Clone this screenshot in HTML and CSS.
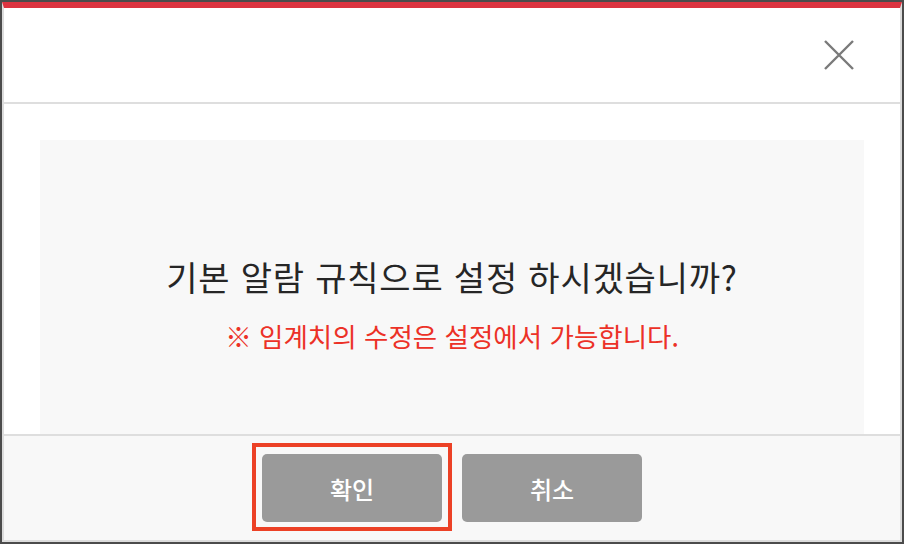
FILE: index.html
```html
<!DOCTYPE html>
<html lang="ko">
<head>
  <meta charset="UTF-8" />
  <meta name="viewport" content="width=device-width, initial-scale=1.0"/>
  <title>알람 규칙</title>
  <link rel="stylesheet" href="styles.css">
</head>
<body>
  <div class="dialog">
    <div class="dialog-header">
      <button class="close" aria-label="닫기">
        <svg width="32" height="32" viewBox="0 0 32 32">
          <path d="M2 2 L30 30 M30 2 L2 30" stroke="#7a7a7a" stroke-width="2.4" fill="none"/>
        </svg>
      </button>
    </div>

    <div class="dialog-body">
      <div class="message">
        <p class="question">기본 알람 규칙으로 설정 하시겠습니까?</p>
        <p class="notice">※ 임계치의 수정은 설정에서 가능합니다.</p>
      </div>
    </div>

    <div class="dialog-footer">
      <button class="btn selected">확인</button>
      <button class="btn">취소</button>
    </div>
  </div>
</body>
</html>
```

FILE: styles.css
```css
body {
  font-family: 'Noto Sans CJK KR', 'Noto Sans', sans-serif;
  background: #4b4b4b;
  margin: 0;
  padding: 2px;
  height: 544px;
  box-sizing: border-box;
}

.dialog {
  background: white;
  border: 2px solid #dcdcdc;
  border-top: 6px solid #dc3340;
  height: 100%;
  box-sizing: border-box;
  display: flex;
  flex-direction: column;
}

.dialog-header {
  height: 94px;
  border-bottom: 2px solid #dedede;
  display: flex;
  justify-content: flex-end;
  align-items: center;
  padding-right: 45px;
  flex-shrink: 0;
}

.close {
  background: none;
  border: none;
  padding: 0;
  width: 32px;
  height: 32px;
  cursor: pointer;
}

.close svg {
  display: block;
}

.dialog-body {
  flex: 1;
  padding: 36px 36px 0;
  display: flex;
}

.message {
  flex: 1;
  background: #f8f8f8;
  padding-top: 115px;
  text-align: center;
}

.message p {
  margin: 0;
}

.question {
  font-size: 34px;
  line-height: 44px;
  letter-spacing: 0.8px;
  color: #262626;
}

.notice {
  font-size: 26.5px;
  line-height: 34px;
  color: #ec3127;
  margin-top: 20px !important;
}

.dialog-footer {
  height: 104px;
  flex-shrink: 0;
  border-top: 2px solid #dedede;
  background: #f8f8f8;
  display: flex;
  justify-content: center;
  align-items: center;
  gap: 20px;
}

.btn {
  width: 180px;
  height: 68px;
  background: #9a9a9a;
  color: white;
  border: none;
  border-radius: 5px;
  font-family: inherit;
  font-size: 24px;
  font-weight: 500;
  cursor: pointer;
}

/* red highlight box around the confirm button */
.btn.selected {
  position: relative;
}

.btn.selected::after {
  content: "";
  position: absolute;
  top: -11px;
  bottom: -9px;
  left: -10px;
  right: -10px;
  border: 4px solid #ec4126;
}
```
